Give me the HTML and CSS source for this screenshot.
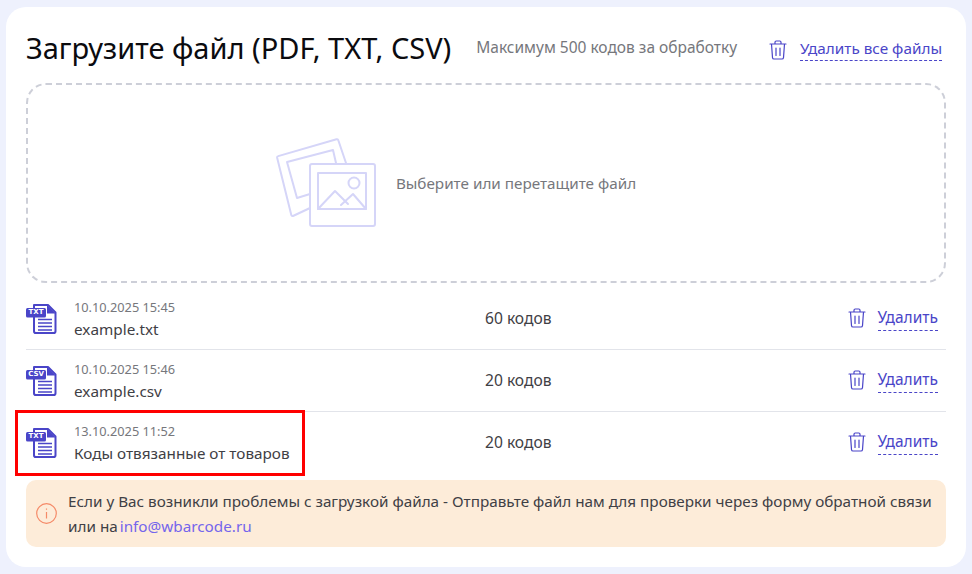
FILE: index.html
```html
<!DOCTYPE html>
<html lang="ru">
<head>
  <meta charset="UTF-8" />
  <title>Загрузка файлов</title>
  <link rel="stylesheet" href="styles.css">
</head>
<body>
  <svg class="sprites" width="0" height="0">
    <symbol id="trash" viewBox="0 0 18 20">
      <path d="M1 4h16M6 4V2.200C6 1.500 6.500 1 7.200 1h3.600c.7 0 1.200.5 1.200 1.200V4M2.500 4l1 13.600c.1.800.7 1.400 1.500 1.400h8c.8 0 1.400-.6 1.500-1.400l1-13.600M7 8v7.500M11 8v7.500" fill="none" stroke="currentColor" stroke-width="1.200" stroke-linecap="round" stroke-linejoin="round"/>
    </symbol>
    <symbol id="doc" viewBox="0 0 31 30">
      <path d="M8 1h14l7.500 7.500v18.700c0 1-.8 1.800-1.800 1.800H9.800c-1 0-1.800-.8-1.800-1.800z" fill="#fff" stroke="#4a45c8" stroke-width="2" stroke-linejoin="round"/>
      <path d="M21 1v8.500h8.500z" fill="#4a45c8"/>
      <path d="M12 15.500h14M12 19h14M12 22.500h14M12 26h14" stroke="#4a45c8" stroke-width="1.500"/>
      <rect x="0" y="4" width="20" height="9.500" rx="1.500" fill="#4a45c8"/>
    </symbol>
  </svg>

  <main class="card">
    <header class="head">
      <h1 class="title">Загрузите файл (PDF, TXT, CSV)</h1>
      <span class="limit">Максимум 500 кодов за обработку</span>
      <span class="remove remove-all">
        <svg class="trash"><use href="#trash"/></svg>
        <a class="dashed">Удалить все файлы</a>
      </span>
    </header>

    <div class="drop">
      <svg class="drop-icon" width="100" height="90" viewBox="0 0 100 90">
        <g fill="none" stroke="#d5d5f8" stroke-width="2" stroke-linejoin="round" stroke-linecap="round">
          <path d="M34 70 17 78c-.8.200-1.500-.1-1.700-.9L1.200 20c-.2-.9.200-1.700 1-1.900L60.500 1.300c.8-.2 1.600.2 1.800 1L70 25"/>
          <path d="M34 56 21 60 11 24 57 12 60 25"/>
          <rect x="34" y="26" width="65" height="62" rx="2"/>
          <rect x="42" y="35" width="48" height="36"/>
          <circle cx="78" cy="45" r="5.500"/>
          <path d="M42 71 59 53 72 66M65 67 77 56 90 71"/>
        </g>
      </svg>
      <span class="drop-text">Выберите или перетащите файл</span>
    </div>

    <ul class="files">
      <li class="file">
        <span class="badge-doc"><svg class="doc"><use href="#doc"/></svg><b>TXT</b></span>
        <div class="meta">
          <div class="date">10.10.2025 15:45</div>
          <div class="name">example.txt</div>
        </div>
        <div class="count">60 кодов</div>
        <span class="remove">
          <svg class="trash"><use href="#trash"/></svg>
          <a class="dashed">Удалить</a>
        </span>
      </li>
      <li class="file">
        <span class="badge-doc"><svg class="doc"><use href="#doc"/></svg><b>CSV</b></span>
        <div class="meta">
          <div class="date">10.10.2025 15:46</div>
          <div class="name">example.csv</div>
        </div>
        <div class="count">20 кодов</div>
        <span class="remove">
          <svg class="trash"><use href="#trash"/></svg>
          <a class="dashed">Удалить</a>
        </span>
      </li>
      <li class="file marked">
        <span class="badge-doc"><svg class="doc"><use href="#doc"/></svg><b>TXT</b></span>
        <div class="meta">
          <div class="date">13.10.2025 11:52</div>
          <div class="name">Коды отвязанные от товаров</div>
        </div>
        <div class="count">20 кодов</div>
        <span class="remove">
          <svg class="trash"><use href="#trash"/></svg>
          <a class="dashed">Удалить</a>
        </span>
      </li>
    </ul>

    <div class="notice">
      <svg class="notice-icon" width="21" height="21" viewBox="0 0 21 21">
        <circle cx="10.500" cy="10.500" r="9.800" fill="none" stroke="#f58a68" stroke-width="1.200"/>
        <path d="M10.500 9v6.500M10.500 5.500v1.200" stroke="#f58a68" stroke-width="1.200"/>
      </svg>
      <p class="notice-text">Если у Вас возникли проблемы с загрузкой файла - Отправьте файл нам для проверки через форму обратной связи или на <a class="mail">info@wbarcode.ru</a></p>
    </div>
  </main>
</body>
</html>
```

FILE: styles.css
```css
:root {
  --bg: #eef1fd;
  --text: #3f4045;
  --muted: #76777c;
  --accent: #4a45c8;
  --line: #e2e4ea;
}

* {
  box-sizing: border-box;
}

body {
  margin: 0;
  padding: 7px 6px;
  background: var(--bg);
  font-family: 'Noto Sans', sans-serif;
  color: var(--text);
}

.sprites {
  position: absolute;
}

.card {
  height: 560px;
  padding: 20px 20px 0;
  background: #fff;
  border-radius: 20px;
}

.head {
  display: flex;
  align-items: center;
  height: 40px;
  margin-bottom: 16px;
}

.title {
  margin: 0;
  font-size: 29px;
  font-weight: 400;
  color: #0b0b0f;
  white-space: nowrap;
}

.limit {
  margin-left: 25px;
  font-size: 15.500px;
  color: var(--muted);
  white-space: nowrap;
}

.remove {
  display: flex;
  align-items: center;
  gap: 12px;
  padding-bottom: 1px;
  color: var(--accent);
  font-size: 15.500px;
}

.remove-all {
  margin-left: auto;
  gap: 13px;
  padding: 5px 4px 0 0;
  font-size: 15.300px;
}

.dashed {
  padding-bottom: 2px;
  border-bottom: 1px dashed var(--accent);
}

.trash {
  width: 18px;
  height: 20px;
}

.drop {
  display: flex;
  align-items: center;
  justify-content: center;
  gap: 20px;
  height: 200px;
  padding-right: 60px;
  border: 2px dashed #cdcfd8;
  border-radius: 20px;
}

.drop-text {
  font-size: 15.250px;
  color: var(--muted);
}

.files {
  margin: 5px 0 0;
  padding: 0;
  list-style: none;
}

.file {
  position: relative;
  display: grid;
  grid-template-columns: 48px 411px 1fr auto;
  align-items: center;
  height: 62px;
  padding-right: 8px;
  border-bottom: 1px solid var(--line);
}

.file:last-child {
  border-bottom-color: transparent;
}

.badge-doc {
  position: relative;
  display: block;
  width: 31px;
  height: 30px;
}

.doc {
  display: block;
  width: 31px;
  height: 30px;
}

.badge-doc b {
  position: absolute;
  left: 0;
  top: 4px;
  width: 20px;
  font-family: 'DejaVu Sans', sans-serif;
  font-size: 7px;
  line-height: 9.500px;
  text-align: center;
  color: #fff;
}

.date {
  font-size: 12.750px;
  color: var(--muted);
}

.name {
  margin-top: 3px;
  font-size: 15.300px;
}

.count {
  padding-bottom: 2px;
  font-size: 15.600px;
}

.marked::after {
  content: "";
  position: absolute;
  left: -11px;
  top: -2px;
  box-sizing: border-box;
  width: 290px;
  height: 66px;
  border: 3px solid #f00;
  pointer-events: none;
}

.notice {
  display: flex;
  align-items: center;
  gap: 11px;
  height: 67px;
  margin-top: 6px;
  padding: 0 10px 0 10px;
  background: #fdecd9;
  border-radius: 10px;
}

.notice-icon {
  flex-shrink: 0;
}

.notice-text {
  margin: 0;
  font-size: 15.270px;
  line-height: 25px;
}

.mail {
  margin-left: -2px;
  color: #7465ec;
}
```
